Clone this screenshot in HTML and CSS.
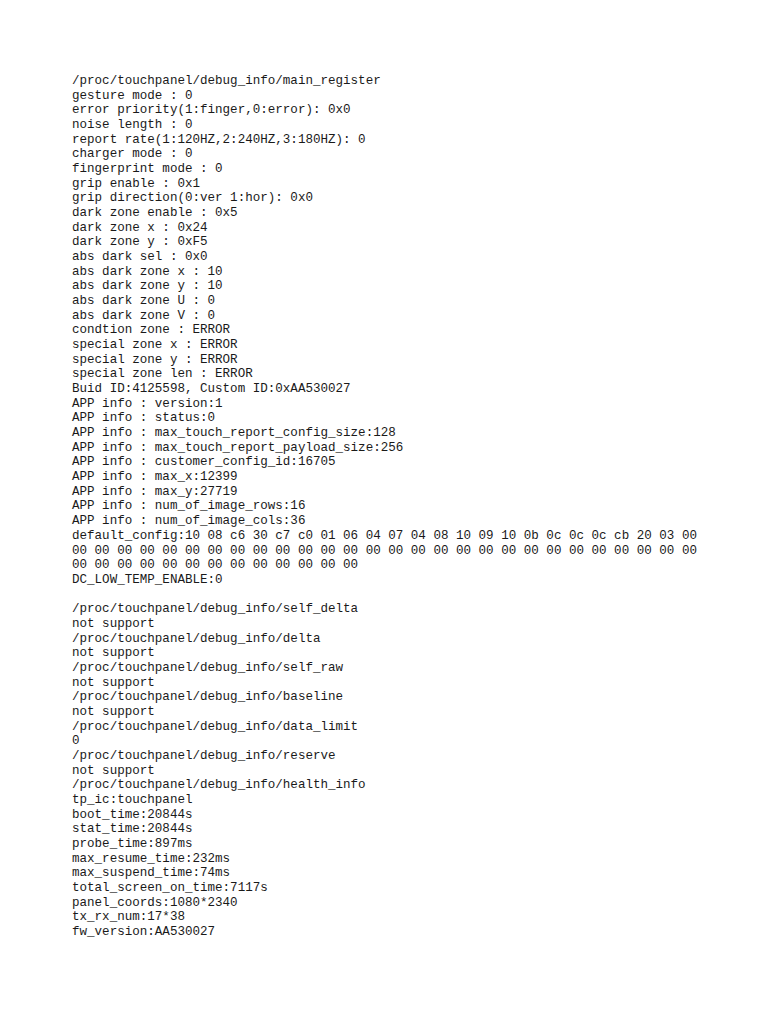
FILE: index.html
```html
<!DOCTYPE html>
<html>
<head>
<meta charset="utf-8">
<link rel="stylesheet" href="styles.css">
</head>
<body>
<pre class="log">/proc/touchpanel/debug_info/main_register
gesture mode : 0
error priority(1:finger,0:error): 0x0
noise length : 0
report rate(1:120HZ,2:240HZ,3:180HZ): 0
charger mode : 0
fingerprint mode : 0
grip enable : 0x1
grip direction(0:ver 1:hor): 0x0
dark zone enable : 0x5
dark zone x : 0x24
dark zone y : 0xF5
abs dark sel : 0x0
abs dark zone x : 10
abs dark zone y : 10
abs dark zone U : 0
abs dark zone V : 0
condtion zone : ERROR
special zone x : ERROR
special zone y : ERROR
special zone len : ERROR
Buid ID:4125598, Custom ID:0xAA530027
APP info : version:1
APP info : status:0
APP info : max_touch_report_config_size:128
APP info : max_touch_report_payload_size:256
APP info : customer_config_id:16705
APP info : max_x:12399
APP info : max_y:27719
APP info : num_of_image_rows:16
APP info : num_of_image_cols:36
default_config:10 08 c6 30 c7 c0 01 06 04 07 04 08 10 09 10 0b 0c 0c 0c cb 20 03 00
00 00 00 00 00 00 00 00 00 00 00 00 00 00 00 00 00 00 00 00 00 00 00 00 00 00 00 00
00 00 00 00 00 00 00 00 00 00 00 00 00
DC_LOW_TEMP_ENABLE:0

/proc/touchpanel/debug_info/self_delta
not support
/proc/touchpanel/debug_info/delta
not support
/proc/touchpanel/debug_info/self_raw
not support
/proc/touchpanel/debug_info/baseline
not support
/proc/touchpanel/debug_info/data_limit
0
/proc/touchpanel/debug_info/reserve
not support
/proc/touchpanel/debug_info/health_info
tp_ic:touchpanel
boot_time:20844s
stat_time:20844s
probe_time:897ms
max_resume_time:232ms
max_suspend_time:74ms
total_screen_on_time:7117s
panel_coords:1080*2340
tx_rx_num:17*38
fw_version:AA530027</pre>
</body>
</html>
```

FILE: styles.css
```css
html, body {
  margin: 0;
  padding: 0;
  background: #ffffff;
}

body {
  width: 768px;
  min-height: 1024px;
}

.log {
  margin: 0;
  padding: 74px 0 0 72px;
  font-family: "Liberation Mono", "Courier New", monospace;
  font-size: 12.55px;
  line-height: 14.67px;
  color: #1a1a1a;
  white-space: pre;
}
```
